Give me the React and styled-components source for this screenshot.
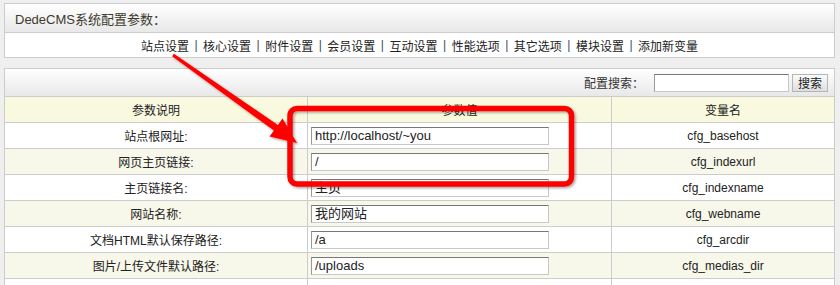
import React from 'react';
import styled, { createGlobalStyle } from 'styled-components';

const GlobalStyle = createGlobalStyle`
  body {
    margin: 0;
    background: #efefef;
    font-family: "Liberation Sans", "Noto Sans CJK SC", sans-serif;
    font-size: 12px;
    color: #333;
  }
`;

const Page = styled.div`
  position: relative;
  width: 840px;
  height: 285px;
  overflow: hidden;
  box-sizing: border-box;
  padding: 3px 0 0 4px;
`;

const Panel = styled.div`
  width: 831px;
  box-sizing: border-box;
  border: 1px solid #cccccc;
  background: #ffffff;
  margin-bottom: 10px;
`;

const TitleBar = styled.div`
  height: 29px;
  box-sizing: border-box;
  border-bottom: 1px solid #cccccc;
  background: linear-gradient(#ffffff, #e8e8e8);
  display: flex;
  align-items: center;
  padding-left: 10px;
  font-size: 13px;
  color: #3b3a2c;
`;

const NavBar = styled.div`
  height: 24px;
  display: flex;
  align-items: center;
  justify-content: center;
  font-size: 12px;
  color: #222;
`;

const NavSep = styled.span`
  color: #3a4a6a;
  margin: 0 5.5px;
`;

const SearchBar = styled.div`
  height: 28px;
  box-sizing: border-box;
  border-bottom: 1px solid #cccccc;
  background: linear-gradient(#ffffff, #e8e8e8);
  display: flex;
  align-items: center;
  justify-content: flex-end;
  padding-right: 6px;
  gap: 3px;
`;

const SearchLabel = styled.span`
  margin-right: 7px;
`;

const TextInput = styled.div`
  width: ${p => p.$w}px;
  height: 18px;
  box-sizing: border-box;
  border: 1px solid #c8c8c8;
  border-top-color: #777;
  border-left-color: #999;
  background: #fff;
  font-size: 13px;
  line-height: 16px;
  padding-left: 3px;
  color: #222;
  white-space: nowrap;
  overflow: hidden;
`;

const Button = styled.div`
  width: 36px;
  height: 18px;
  box-sizing: border-box;
  border: 1px solid #b5b5b5;
  background: linear-gradient(#fbfbfb, #dedede);
  display: flex;
  align-items: center;
  justify-content: center;
  font-size: 12px;
  color: #222;
`;

const Row = styled.div`
  display: grid;
  grid-template-columns: 303px 304px 1fr;
  height: 26px;
  box-sizing: border-box;
  border-bottom: 1px solid #cccccc;
  background: ${p => (p.$head ? '#f9f9df' : p.$alt ? '#f7f7ea' : '#ffffff')};
`;

const Cell = styled.div`
  display: flex;
  align-items: center;
  justify-content: ${p => (p.$left ? 'flex-start' : 'center')};
  padding-left: ${p => (p.$left ? '3px' : '0')};
  border-right: ${p => (p.$last ? 'none' : '1px solid #cccccc')};
  box-sizing: border-box;
  font-size: 12px;
  color: #222;
  white-space: nowrap;
`;

const Overlay = styled.svg`
  position: absolute;
  left: 0;
  top: 0;
  pointer-events: none;
`;

const navItems = ['站点设置', '核心设置', '附件设置', '会员设置', '互动设置', '性能选项', '其它选项', '模块设置', '添加新变量'];

const rows = [
  ['站点根网址:', 'http://localhost/~you', 'cfg_basehost'],
  ['网页主页链接:', '/', 'cfg_indexurl'],
  ['主页链接名:', '主页', 'cfg_indexname'],
  ['网站名称:', '我的网站', 'cfg_webname'],
  ['文档HTML默认保存路径:', '/a', 'cfg_arcdir'],
  ['图片/上传文件默认路径:', '/uploads', 'cfg_medias_dir'],
  ['编辑器(是/否)使用XHTML:', '', 'cfg_fck_xhtml'],
];

// annotation arrow: tapered shaft + head
const arrow = '173.9,53.8 277.9,125 282.5,118.5 297,143 269.5,136.5 273.9,130.6 172.1,56.2';

const App = () => (
  <Page>
    <GlobalStyle />
    <Panel>
      <TitleBar>DedeCMS系统配置参数：</TitleBar>
      <NavBar>
        {navItems.map((item, i) => (
          <React.Fragment key={item}>
            {i > 0 && <NavSep>|</NavSep>}
            <span>{item}</span>
          </React.Fragment>
        ))}
      </NavBar>
    </Panel>
    <Panel>
      <SearchBar>
        <SearchLabel>配置搜索：</SearchLabel>
        <TextInput $w={135} />
        <Button>搜索</Button>
      </SearchBar>
      <Row $head>
        <Cell>参数说明</Cell>
        <Cell>参数值</Cell>
        <Cell $last>变量名</Cell>
      </Row>
      {rows.map(([label, value, name], i) => (
        <Row key={name} $alt={i % 2 === 1}>
          <Cell>{label}</Cell>
          <Cell $left>{value !== '' && <TextInput $w={238}>{value}</TextInput>}</Cell>
          <Cell $last>{name}</Cell>
        </Row>
      ))}
    </Panel>
    <Overlay width="840" height="285" viewBox="0 0 840 285">
      <defs>
        <filter id="shade" x="-10%" y="-10%" width="130%" height="130%">
          <feDropShadow dx="1.5" dy="1.5" stdDeviation="1.2" floodColor="#000" floodOpacity="0.35" />
        </filter>
      </defs>
      <g filter="url(#shade)">
        <polygon points={arrow} fill="#ff0000" />
        <rect x="290" y="108.5" width="281.5" height="75.5" rx="7" fill="none" stroke="#ff0000" strokeWidth="5.5" />
      </g>
    </Overlay>
  </Page>
);

export default App;
